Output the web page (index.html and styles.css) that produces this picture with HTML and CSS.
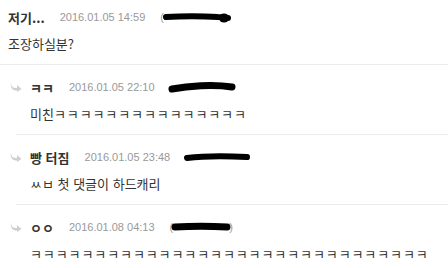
FILE: index.html
```html
<!DOCTYPE html>
<html lang="ko">
<head>
  <meta charset="UTF-8" />
  <title>댓글</title>
  <link rel="stylesheet" href="styles.css">
</head>
<body>
  <ul class="comments">
    <li class="comment">
      <div class="head">
        <span class="name">저기...</span>
        <span class="date">2016.01.05 14:59</span>
        <span class="ip">(<svg class="mask" width="70" height="12" viewBox="0 0 70 12"><path d="M4 6 C20 5 40 5 56 6 C62 6 65 7 66 7" stroke="#000" stroke-width="6" stroke-linecap="round" fill="none"/><ellipse cx="62" cy="7" rx="5" ry="4.5" fill="#000"/></svg></span>
      </div>
      <p class="text">조장하실분?</p>
    </li>
    <li class="comment reply">
      <div class="head">
        <svg class="arrow" width="12" height="10" viewBox="0 0 12 10"><path d="M1 0 C1 5 3 6 7 6 L7 3 L11.5 7 L7 10 L7 8.5 C2.5 8.5 0 6 1 0 Z" fill="#cfcfcf"/></svg>
        <span class="name">ㅋㅋ</span>
        <span class="date">2016.01.05 22:10</span>
        <span class="ip"><svg class="mask" width="70" height="14" viewBox="0 0 70 14"><path d="M4 9 C20 6 45 4 64 7" stroke="#000" stroke-width="7" stroke-linecap="round" fill="none"/></svg></span>
      </div>
      <p class="text">미친<span class="jamo">ㅋㅋㅋㅋㅋㅋㅋㅋㅋㅋㅋㅋㅋㅋㅋ</span></p>
    </li>
    <li class="comment reply">
      <div class="head">
        <svg class="arrow" width="12" height="10" viewBox="0 0 12 10"><path d="M1 0 C1 5 3 6 7 6 L7 3 L11.5 7 L7 10 L7 8.5 C2.5 8.5 0 6 1 0 Z" fill="#cfcfcf"/></svg>
        <span class="name">빵 터짐</span>
        <span class="date">2016.01.05 23:48</span>
        <span class="ip"><svg class="mask" width="70" height="12" viewBox="0 0 70 12"><path d="M4 7 C20 5 45 5 64 6" stroke="#000" stroke-width="6" stroke-linecap="round" fill="none"/></svg></span>
      </div>
      <p class="text">ㅆㅂ 첫 댓글이 하드캐리</p>
    </li>
    <li class="comment reply">
      <div class="head">
        <svg class="arrow" width="12" height="10" viewBox="0 0 12 10"><path d="M1 0 C1 5 3 6 7 6 L7 3 L11.5 7 L7 10 L7 8.5 C2.5 8.5 0 6 1 0 Z" fill="#cfcfcf"/></svg>
        <span class="name">ㅇㅇ</span>
        <span class="date">2016.01.08 04:13</span>
        <span class="ip">(<svg class="mask" width="60" height="12" viewBox="0 0 60 12"><path d="M4 6 C20 5 40 5 56 6" stroke="#000" stroke-width="7" stroke-linecap="round" fill="none"/></svg>)</span>
      </div>
      <p class="text"><span class="jamo">ㅋㅋㅋㅋㅋㅋㅋㅋㅋㅋㅋㅋㅋㅋㅋㅋㅋㅋㅋㅋㅋㅋㅋㅋㅋㅋㅋㅋㅋㅋㅋ</span></p>
    </li>
  </ul>
</body>
</html>
```

FILE: styles.css
```css
body {
  margin: 0;
  background: #fff;
  color: #333;
  font-family: "Liberation Sans", "Noto Sans CJK KR", sans-serif;
  overflow: hidden;
}
.comments {
  list-style: none;
  margin: 0;
  padding: 0;
}
.comment {
  padding: 14px 8px 11px;
  border-bottom: 1px solid #ebebeb;
}
.comment:first-child {
  padding-top: 9px;
}
.reply {
  margin-left: 16px;
  padding-left: 14px;
}
.head {
  display: flex;
  align-items: center;
  height: 16px;
  white-space: nowrap;
}
.arrow {
  margin-left: -20px;
  margin-right: 8px;
}
.name {
  font-family: "Noto Sans CJK KR", sans-serif;
  font-size: 13px;
  font-weight: bold;
  color: #333;
}
.date {
  margin-left: 15px;
  font-size: 11px;
  color: #999;
}
.ip {
  display: flex;
  align-items: center;
  margin-left: 15px;
  font-size: 11px;
  color: #999;
}
.mask {
  margin-left: -2px;
  margin-right: -2px;
}
.text {
  margin: 10px 0 0;
  font-family: "Noto Sans CJK KR", sans-serif;
  font-size: 13px;
  line-height: 18px;
  white-space: nowrap;
  color: #333;
}
.jamo {
  letter-spacing: 0.9px;
}
```
